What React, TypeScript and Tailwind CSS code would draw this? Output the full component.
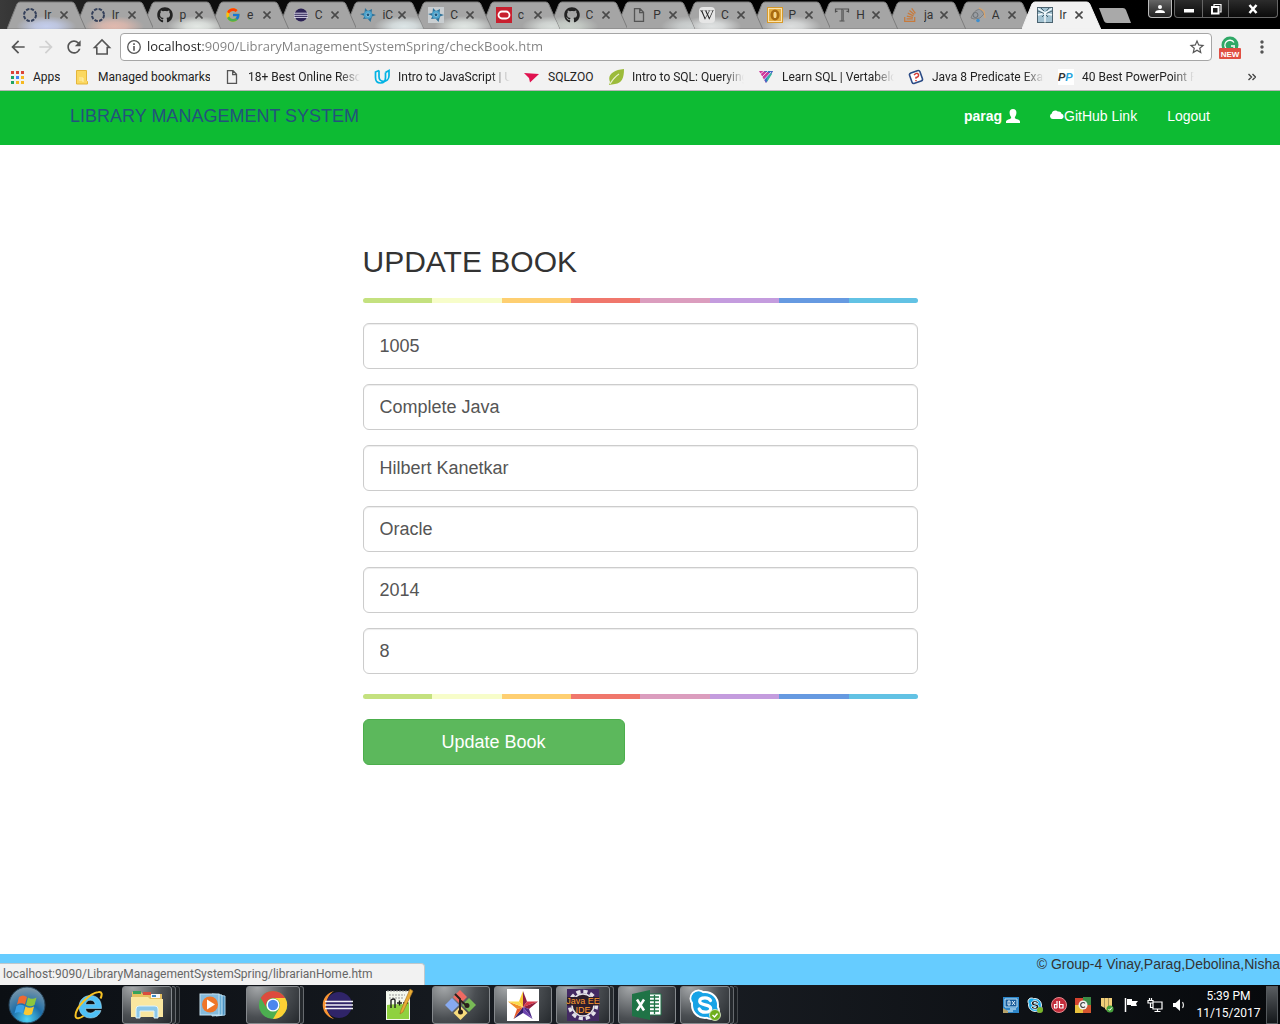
import type { ReactNode } from "react";
import { FaGithub, FaWikipediaW, FaStackOverflow, FaSkype } from "react-icons/fa";
import { FcGoogle } from "react-icons/fc";
import { MdArrowBack, MdArrowForward, MdRefresh, MdStarBorder, MdMoreVert } from "react-icons/md";

const ui = "font-['Open_Sans','Noto_Sans',sans-serif]";
const uiNarrow = "font-[Roboto,'Open_Sans',sans-serif]";

/* ---------- favicons ---------- */

const Ring = () => (
  <svg viewBox="0 0 16 16" className="size-4">
    <circle cx="8" cy="8" r="6" fill="none" stroke="#34405a" strokeWidth="2" strokeDasharray="3.4 1.3" />
  </svg>
);
const EclipseSmall = () => (
  <svg viewBox="0 0 16 16" className="size-4">
    <circle cx="8" cy="8" r="6.5" fill="#2c2255" />
    <path d="M1 6.2h14M1 8.3h14M1 10.4h14" stroke="#d8d4e8" strokeWidth="1" />
  </svg>
);
const Compass = ({ boxed = false }: { boxed?: boolean }) => (
  <svg viewBox="0 0 16 16" className="size-4">
    {boxed && <rect width="16" height="16" fill="#c9ced1" />}
    <path d="M5 1l3 3 4-2-.5 4.500L16 8l-4 1.500-1.500 5.500-3-3.500L3 12l1.500-3L0 7l4.500-1z" fill="#2f7299" />
    <circle cx="8" cy="7.800" r="4" fill="#4ba2cc" />
    <circle cx="8" cy="7.800" r="1.800" fill="#1f5479" stroke="#9ed3ea" strokeWidth=".7" />
  </svg>
);
const Oracle = () => (
  <svg viewBox="0 0 16 16" className="size-4">
    <rect width="16" height="16" fill="#c8202f" />
    <rect x="2.500" y="4.500" width="11" height="7" rx="3.500" fill="none" stroke="#fff" strokeWidth="1.800" />
  </svg>
);
const PageIcon = () => (
  <svg viewBox="0 0 16 16" className="size-4">
    <path d="M3.500 1.700h5.500l3.500 3.600v9H3.500zM8.700 1.900v3.700h3.600" fill="none" stroke="#555" strokeWidth="1.300" />
  </svg>
);
const Wiki = () => (
  <span className="flex size-4 items-center justify-center rounded bg-[#e6e6e6]">
    <FaWikipediaW className="size-3.5 text-[#222]" />
  </span>
);
const Gold = () => (
  <svg viewBox="0 0 16 16" className="size-4">
    <rect width="16" height="16" fill="#d79a2b" />
    <rect x="1.500" y="1.500" width="13" height="13" fill="#e3ad43" stroke="#fbe3ae" />
    <ellipse cx="8" cy="8" rx="3.300" ry="4.300" fill="none" stroke="#a86a12" strokeWidth="2.500" />
    <path d="M8 5v6" stroke="#fff1c5" strokeWidth="1.200" />
  </svg>
);
const SerifT = () => (
  <svg viewBox="0 0 16 16" className="size-4">
    <path d="M1.500 5.500V2h13v3.500M8 2v12M5.500 14h5M1.500 4.300h2M12.500 4.300h2" fill="none" stroke="#505050" strokeWidth="1.200" />
    <path d="M9.500 2.500V14" stroke="#6c6c6c" />
  </svg>
);
const Sketch = () => (
  <svg viewBox="0 0 16 16" className="size-4">
    <path d="M1 11C3 5 6 3 10 2l4 5-4 4-6 1z" fill="#999da2" stroke="#777" strokeWidth=".8" />
    <path d="M9 1l5 3 1 7" fill="none" stroke="#d9a36a" strokeWidth="1.200" />
    <circle cx="5.500" cy="8" r="2.500" fill="none" stroke="#6d7175" />
    <circle cx="8" cy="13.500" r="1.800" fill="#3d8fd0" />
  </svg>
);
const Windmill = () => (
  <svg viewBox="0 0 16 16" className="size-4">
    <rect x=".5" y=".5" width="15" height="15" fill="#a3c3d2" stroke="#4b6370" />
    <path d="M1 1.500l7 4.500 7-4.500M1 8l7-2 7 2M8 6v9.500" fill="none" stroke="#f5fbfd" strokeWidth="1.400" />
    <path d="M1 4l6 2.500M15 4L9.500 6.500M4 1l3 3M12 1L9.500 4M5 10l2-2M11 10L9 8" fill="none" stroke="#45616f" />
  </svg>
);

/* ---------- tab strip ---------- */

type TabData = { label: string; icon: ReactNode; glow?: string; at?: string };

const tabs: TabData[] = [
  { label: "Ir", icon: <Ring />, glow: "#c3cdec", at: "50%" },
  { label: "Ir", icon: <Ring />, glow: "#e0b9ae", at: "50%" },
  { label: "p", icon: <FaGithub className="size-4 text-[#222]" />, glow: "#e3e8e4", at: "70%" },
  { label: "e", icon: <FcGoogle className="size-4" /> },
  { label: "C", icon: <EclipseSmall /> },
  { label: "iC", icon: <Compass />, glow: "#dde6e7", at: "75%" },
  { label: "C", icon: <Compass boxed />, glow: "#e0e6e3", at: "65%" },
  { label: "c", icon: <Oracle />, glow: "#d7dcd9", at: "90%" },
  { label: "C", icon: <FaGithub className="size-4 text-[#222]" />, glow: "#c9d0ca", at: "25%" },
  { label: "P", icon: <PageIcon />, glow: "#cdd1d1", at: "95%" },
  { label: "C", icon: <Wiki />, glow: "#dfe2e2", at: "35%" },
  { label: "P", icon: <Gold />, glow: "#dcdede", at: "50%" },
  { label: "H", icon: <SerifT /> },
  { label: "ja", icon: <FaStackOverflow className="size-4 text-[#c77a3c]" /> },
  { label: "A", icon: <Sketch /> },
  { label: "Ir", icon: <Windmill /> },
];

function Tab({ tab, index }: { tab: TabData; index: number }) {
  const active = index === tabs.length - 1;
  const shape = "M0 28 10 3Q11 1 13 1H65Q67 1 68 3L79 28z";
  return (
    <div className="relative h-7 min-w-0 flex-1" style={{ zIndex: active ? 30 : 20 - index }}>
      <svg viewBox="0 0 79 28" preserveAspectRatio="none" className="absolute top-0 left-0 h-7 w-[calc(100%+11px)]">
        {tab.glow && (
          <radialGradient id={`glow${index}`} cx={tab.at} cy="90%" r="38%">
            <stop offset="0" stopColor={tab.glow} />
            <stop offset=".4" stopColor={tab.glow} stopOpacity=".8" />
            <stop offset="1" stopColor={tab.glow} stopOpacity="0" />
          </radialGradient>
        )}
        <path d={shape} fill={active ? "#f2f2f2" : "#a5a5a5"} stroke={active ? "#f2f2f2" : "#7c7c7c"} strokeWidth="1" />
        {tab.glow && <path d={shape} fill={`url(#glow${index})`} />}
      </svg>
      <div className="relative flex h-7 items-center pl-[15px]">
        <span className="size-4 shrink-0">{tab.icon}</span>
        <span className={`ml-1.5 w-3 shrink-0 overflow-hidden text-xs whitespace-nowrap text-[#333] ${uiNarrow}`}>{tab.label}</span>
        <button aria-label="Close tab" className="ml-1 shrink-0">
          <svg viewBox="0 0 8 8" className="size-2">
            <path d="M.5.5l7 7M7.500.5l-7 7" stroke="#4a4a4a" strokeWidth="1.600" />
          </svg>
        </button>
      </div>
    </div>
  );
}

function TabStrip() {
  return (
    <div className="flex h-[29px] items-start bg-linear-to-r from-[#3a3a3a] via-[#111] via-10% to-black pl-[7px]">
      <div className="flex min-w-0 flex-1 pt-px">
        {tabs.map((t, i) => (
          <Tab key={i} tab={t} index={i} />
        ))}
      </div>
      <div className="flex w-[190px] shrink-0 justify-between pr-0.5 pl-2">
        <button aria-label="New tab" className="mt-2">
          <svg viewBox="0 0 34 15" className="h-[15px] w-[34px]">
            <path d="M1 0h24q2 0 3 2l5 13H9q-2 0-3-2z" fill="#a9a9a9" />
          </svg>
        </button>
        <div className="flex gap-0.5">
          <button aria-label="Profile" className="flex h-[18px] w-6 items-center justify-center rounded-b border border-t-0 border-[#bbb] bg-linear-to-b from-[#666] to-[#222]">
            <svg viewBox="0 0 10 10" className="size-2.5" fill="#fff">
              <circle cx="5" cy="3" r="2" />
              <path d="M0 9q0-3 5-3t5 3z" />
            </svg>
          </button>
          <div className="flex h-[18px] divide-x divide-[#666] rounded-b border border-t-0 border-[#666] bg-linear-to-b from-[#2c2c2c] to-[#0b0b0b]">
            <button aria-label="Minimize" className="flex w-7 items-center justify-center">
              <svg viewBox="0 0 12 12" className="size-3"><path d="M1 6h10v3.500H1z" fill="#fff" /></svg>
            </button>
            <button aria-label="Restore" className="flex w-[26px] items-center justify-center">
              <svg viewBox="0 0 12 12" className="size-3" fill="none" stroke="#fff">
                <path d="M4 3V1.500h7V9H9.500" strokeWidth="1.200" />
                <path d="M2 4h6.500v6.500H2z" strokeWidth="2" />
              </svg>
            </button>
            <button aria-label="Close window" className="flex w-12 items-center justify-center">
              <svg viewBox="0 0 12 12" className="size-3"><path d="M2.500 2l7 8M9.500 2l-7 8" stroke="#fff" strokeWidth="2.500" /></svg>
            </button>
          </div>
        </div>
      </div>
    </div>
  );
}

/* ---------- toolbar ---------- */

function Toolbar() {
  return (
    <div className="flex h-9 items-center bg-[#f2f2f2] pr-2 pl-2">
      <div className="flex w-28 shrink-0 items-center gap-2 text-[#555]">
        <button aria-label="Back"><MdArrowBack className="size-5" /></button>
        <button aria-label="Forward" className="text-[#d0d0d0]"><MdArrowForward className="size-5" /></button>
        <button aria-label="Reload"><MdRefresh className="size-5" /></button>
        <button aria-label="Home">
          <svg viewBox="0 0 20 20" className="size-5" fill="none" stroke="#555" strokeWidth="1.600">
            <path d="M2.500 10.500 10 3l7.500 7.500h-2.300V17H4.800v-6.500z" />
          </svg>
        </button>
      </div>
      <div className="flex h-7 min-w-0 flex-1 items-center rounded-sm border border-[#a6a6a6] bg-white px-[5px]">
        <svg viewBox="0 0 16 16" className="size-4 shrink-0" fill="none" stroke="#555">
          <circle cx="8" cy="8" r="6.300" strokeWidth="1.300" />
          <path d="M8 4.300v1.600M8 7v4.700" strokeWidth="1.600" />
        </svg>
        <input
          aria-label="Address"
          defaultValue="localhost:9090/LibraryManagementSystemSpring/checkBook.htm"
          className="ml-[5px] min-w-0 flex-1 bg-[linear-gradient(90deg,#222_56px,#808080_56px)] bg-clip-text text-[13px] text-transparent outline-none"
        />
        <button aria-label="Bookmark this page"><MdStarBorder className="size-[18px] text-[#555]" /></button>
      </div>
      <button aria-label="Grammarly" className="ml-1.5 shrink-0">
        <svg viewBox="0 0 24 24" className="size-6">
          <circle cx="12" cy="10" r="8.500" fill="#2fa866" />
          <path d="M16 7.500A5 5 0 1 0 16.500 12M17 11h-4" fill="none" stroke="#fff" strokeWidth="1.300" />
          <rect x="1" y="13" width="22" height="11" rx="1" fill="#e04f43" />
          <text x="12" y="21.500" textAnchor="middle" fontSize="8" fontWeight="700" fontFamily="Liberation Sans, sans-serif" fill="#fff">NEW</text>
        </svg>
      </button>
      <button aria-label="Menu" className="ml-2.5 shrink-0"><MdMoreVert className="size-5 text-[#555]" /></button>
    </div>
  );
}

/* ---------- bookmarks ---------- */

const AppsIcon = () => (
  <svg viewBox="0 0 16 16" className="size-4">
    <path d="M2 2h3v3H2zM7 2h3v3H7zM12 2h3v3h-3z" fill="#dc4437" />
    <path d="M2 7h3v3H2zM2 12h3v3H2z" fill="#1fa463" />
    <path d="M7 7h3v3H7z" fill="#4285f4" />
    <path d="M12 7h3v3h-3zM7 12h3v3H7zM12 12h3v3h-3z" fill="#f5b921" />
  </svg>
);
const Folder = () => (
  <svg viewBox="0 0 16 16" className="size-4">
    <path d="M2.500 1.500h10v10l1 1V15h-11z" fill="#fbd861" stroke="#e5b63a" />
    <path d="M5 9h4v4M5 11h4" stroke="#fff0b0" fill="none" />
  </svg>
);
const Udacity = () => (
  <svg viewBox="0 0 16 16" className="size-4" fill="none" stroke="#02b3e4" strokeWidth="1.700">
    <path d="M5 1.500 1.500 3v5.500c0 3.500 2 5.500 5 5.500s5-2 5-5.500V3.500" />
    <path d="M5 1.500v6.300c0 2.500 1.500 4.500 4.500 4.500S15 10.300 15 6.800V1.500l-3.500 2" />
  </svg>
);
const SqlZoo = () => (
  <svg viewBox="0 0 16 16" className="size-4"><path d="M0 4l15 1-9 8.500-1-4.500z" fill="#e0124f" /></svg>
);
const Leaf = () => (
  <svg viewBox="0 0 16 16" className="size-4">
    <path d="M16 0c0 9-2 14-9 15l-6 1 1-3C-1 6 5 1 16 0z" fill="#9cbb3a" />
    <path d="M2 15C5 10 8 7 11 5" stroke="#e9f0cd" fill="none" strokeWidth="1.200" />
  </svg>
);
const Vertabelo = () => (
  <svg viewBox="0 0 16 16" className="size-4">
    <path d="M1 2h14L8 14z" fill="#cf3a9c" />
    <path d="M5 2h10L8 14l-2-4 6-6z" fill="#3b6fc9" />
    <path d="M9 9l4-5 1 1-5 8z" fill="#35b99c" />
    <path d="M1 6l5-4M3 9l7-7M5 12l8-9" stroke="#f2f2f2" strokeWidth=".8" />
  </svg>
);
const JavaQ = () => (
  <svg viewBox="0 0 16 16" className="size-4">
    <rect x="2.500" y="2.500" width="11" height="11" rx="2" transform="rotate(-20 8 8)" fill="#fff" stroke="#2c4c86" strokeWidth="1.600" />
    <path d="M6 6q3-3 4.500-.5Q11 8 8 8.500v1.300M8 11v1.200" fill="none" stroke="#d63b33" strokeWidth="1.500" />
  </svg>
);
const PP = () => (
  <svg viewBox="0 0 16 16" className="size-4">
    <rect width="16" height="16" fill="#fff" />
    <text x="0" y="12" fontSize="11" fontWeight="700" fontStyle="italic" fontFamily="Liberation Sans, sans-serif" fill="#333">
      P<tspan fill="#27a4dd">P</tspan>
    </text>
  </svg>
);

const fade = "w-28 mask-[linear-gradient(90deg,#000_82%,transparent)]";
const bookmarks = [
  { label: "Apps", icon: <AppsIcon />, width: "w-[27px]" },
  { label: "Managed bookmarks", icon: <Folder />, width: "w-28" },
  { label: "18+ Best Online Resources", icon: <PageIcon />, width: fade },
  { label: "Intro to JavaScript | Udacity", icon: <Udacity />, width: fade },
  { label: "SQLZOO", icon: <SqlZoo />, width: "w-[46px]" },
  { label: "Intro to SQL: Querying", icon: <Leaf />, width: fade },
  { label: "Learn SQL | Vertabelo", icon: <Vertabelo />, width: fade },
  { label: "Java 8 Predicate Examples", icon: <JavaQ />, width: fade },
  { label: "40 Best PowerPoint Presentations", icon: <PP />, width: fade },
];

function Bookmarks() {
  return (
    <div className={`flex h-[26px] items-center gap-3.5 border-b border-[#b5b5b5] bg-[#f2f2f2] pr-6 pb-0.5 pl-[9px] ${uiNarrow}`}>
      {bookmarks.map((b) => (
        <a key={b.label} href="#" className="flex shrink-0 items-center gap-2 text-xs text-[#222]">
          {b.icon}
          <span className={`${b.width} overflow-hidden whitespace-nowrap`}>{b.label}</span>
        </a>
      ))}
      <button aria-label="More bookmarks" className="ml-auto">
        <svg viewBox="0 0 8 8" className="size-2" fill="none" stroke="#444" strokeWidth="1.400">
          <path d="M.5 1l3 3-3 3M4.500 1l3 3-3 3" />
        </svg>
      </button>
    </div>
  );
}

/* ---------- page ---------- */

const fields = [
  { label: "Book id", value: "1005" },
  { label: "Title", value: "Complete Java" },
  { label: "Author", value: "Hilbert Kanetkar" },
  { label: "Publisher", value: "Oracle" },
  { label: "Year", value: "2014" },
  { label: "Copies", value: "8" },
];

const Rainbow = () => (
  <hr className="my-5 h-[5px] rounded-[5px] border-0 bg-[linear-gradient(90deg,#c4e17f_12.5%,#f7fdca_12.5%,#f7fdca_25%,#fecf71_25%,#fecf71_37.5%,#f0776c_37.5%,#f0776c_50%,#db9dbe_50%,#db9dbe_62.5%,#c49cde_62.5%,#c49cde_75%,#669ae1_75%,#669ae1_87.5%,#62c2e4_87.5%)]" />
);

function Page() {
  return (
    <div className="relative flex flex-1 flex-col bg-white font-['Liberation_Sans',Arial,sans-serif] text-[#333]">
      <nav className="bg-[#0dbb33]">
        <div className="mx-auto flex h-[54px] max-w-[1170px] items-start justify-between px-[15px]">
          <a href="#" className="pt-[15px] text-lg leading-5 text-[#23527c]">LIBRARY MANAGEMENT SYSTEM</a>
          <div className="flex gap-[30px] pt-[15px] text-sm leading-5 text-white">
            <a href="#" className="flex items-center gap-1 font-bold">
              parag
              <svg viewBox="0 0 14 14" className="size-3.5" fill="#fff">
                <path d="M7 0c2.500 0 3.600 1.700 3.400 4-.1 1.800-.7 3-1.500 3.900v1.300c1 .9 5.100 1.600 5.100 3.200V14H0v-1.600c0-1.600 4.100-2.300 5.100-3.200V7.900C4.300 7 3.700 5.800 3.600 4 3.400 1.700 4.500 0 7 0z" />
              </svg>
            </a>
            <a href="#" className="flex items-center">
              <svg viewBox="0 0 14 14" className="size-3.5" fill="#fff">
                <path d="M2.800 10a2.800 2.800 0 0 1-1-5.400C2 1.700 6 .4 7.800 2.600c2-.6 3.700.6 3.700 2.200A2.700 2.700 0 0 1 11.800 10z" />
              </svg>
              GitHub Link
            </a>
            <a href="#">Logout</a>
          </div>
        </div>
      </nav>
      <main className="flex-1 px-4 pt-[100px]">
        <form className="mx-auto max-w-[555px]" onSubmit={(e) => e.preventDefault()}>
          <h2 className="text-[30px] leading-[33px]">UPDATE BOOK</h2>
          <Rainbow />
          <div className="flex flex-col gap-[15px]">
            {fields.map((f) => (
              <input
                key={f.label}
                aria-label={f.label}
                defaultValue={f.value}
                className="h-[46px] w-full rounded-md border border-[#ccc] bg-white px-4 text-lg text-[#555] shadow-[inset_0_1px_1px_rgba(0,0,0,0.075)]"
              />
            ))}
          </div>
          <Rainbow />
          <button type="submit" className="h-[46px] w-[262px] rounded-md border border-[#4cae4c] bg-[#5cb85c] text-lg text-white">
            Update Book
          </button>
        </form>
      </main>
      <footer className="h-[31px] overflow-hidden bg-[#66ccff] text-right text-sm leading-5 whitespace-nowrap">
        © Group-4 Vinay,Parag,Debolina,Nisha
      </footer>
      <div className={`absolute bottom-0 left-0 h-[22px] w-[425px] rounded-tr border border-b-0 border-l-0 border-[#c0c8cc] bg-[#f2f2f2] pl-[3px] text-xs leading-5 text-[#666] ${uiNarrow}`}>
        localhost:9090/LibraryManagementSystemSpring/librarianHome.htm
      </div>
    </div>
  );
}

/* ---------- taskbar ---------- */

const IE = () => (
  <svg viewBox="0 0 32 32" className="size-8">
    <path
      fillRule="evenodd"
      d="M28.500 19.500H12.500c.4 3 2.300 4.500 5 4.500 2 0 3.500-.9 4.500-2.500h6C26.300 26.500 22.500 29 17.500 29 11 29 6 24.300 6 17.800S11 6.500 17.500 6.500c7 0 11.300 5 11 13zM12.600 15.500h9.600c-.4-2.800-2.200-4.300-4.800-4.300s-4.400 1.500-4.800 4.300z"
      fill="#4fc0f6"
      stroke="#b4e8fd"
      strokeWidth=".5"
    />
    <path d="M27.500 9.500c2-4 1.500-7-2-6.500C17 4 2.500 18 2.500 26.500c0 4.500 5 2.500 8 .5" fill="none" stroke="#f7c325" strokeWidth="2" />
  </svg>
);
const Explorer = () => (
  <svg viewBox="0 0 34 32" className="h-8 w-[34px]">
    <path d="M2 3h9l2 2h19v22H2z" fill="#e6c161" />
    <path d="M3 2h8v3H3z" fill="#36a35b" />
    <path d="M13 3h8v3h-8z" fill="#d94d3e" />
    <path d="M21 5h9v4h-9z" fill="#f6f6f6" />
    <path d="M22 6h4v2h-4z" fill="#3b87c6" />
    <path d="M1 8h17l2 2h13v18H1z" fill="#fae7a0" />
    <path d="M6 29V20q0-3 3-3h16q3 0 3 3v9h-4v-7H10v7z" fill="#8cc8ea" stroke="#e0f4fd" />
  </svg>
);
const Media = () => (
  <svg viewBox="0 0 28 28" className="size-7">
    <path d="M17 4l9 1v19l-9 1z" fill="#4b91c0" stroke="#a8d2ea" />
    <path d="M13 3l10 1v20l-10 1z" fill="#68aed6" stroke="#c2e3f3" />
    <rect x="1" y="3" width="19" height="21" fill="#85bbdc" stroke="#c7e2f0" />
    <circle cx="11" cy="13.500" r="8" fill="#ef7629" />
    <path d="M8 8.500v10l8-5z" fill="#fff" />
  </svg>
);
const Chrome = () => (
  <svg viewBox="0 0 32 32" className="size-[30px]">
    <circle cx="16" cy="16" r="15" fill="#4caf50" />
    <path d="M3 8.500A15 15 0 0 1 29 8.500H16a7.500 7.500 0 0 0-6.500 11.200z" fill="#dd4b3e" />
    <path d="M29 8.500A15 15 0 0 1 16 31l6.500-11.300A7.500 7.500 0 0 0 16 8.500z" fill="#fdd034" />
    <circle cx="16" cy="16" r="7" fill="#fff" />
    <circle cx="16" cy="16" r="5.500" fill="#4a87ee" />
  </svg>
);
const Eclipse = () => (
  <svg viewBox="0 0 32 32" className="size-8">
    <path d="M13 2C-2 6-2 26 13 30 3 24 3 8 13 2z" fill="#f79434" />
    <circle cx="18" cy="16" r="13" fill="#2f2468" />
    <path d="M4 12.500h28M4 16h28M4 19.500h28" stroke="#f3f2f9" strokeWidth="1.600" />
  </svg>
);
const Notepad = () => (
  <svg viewBox="0 0 30 34" className="h-[34px] w-[30px]">
    <path d="M2 3h24v29H2z" fill="#f4f8ee" />
    <path d="M3 17c8-2 15 1 22-3v17H3z" fill="#8fd13f" />
    <path d="M3 3h22M5 7h16M5 10h14" stroke="#999" strokeDasharray="2 1" />
    <path d="M7 20v-8q3-2 4 0v8M13 15h5M15.500 12.500v5M19 15h5M21.500 12.500v5" stroke="#202020" strokeWidth="1.400" fill="none" />
    <path d="M26 1l3 2-10 21-3 2 1-4z" fill="#e8ad35" stroke="#a66d20" strokeWidth=".6" />
  </svg>
);
const GitIcon = () => (
  <svg viewBox="0 0 34 34" className="size-[34px]">
    <path d="M16 2l7 7-7 7-7-7z" fill="#f06a62" />
    <path d="M8 10l7 7-7 7-7-7z" fill="#87aaf0" />
    <path d="M25 10l7 7-7 7-7-7z" fill="#79ba56" />
    <path d="M16.500 18l7 7-7 7-7-7z" fill="#f8dc7c" />
    <path d="M11 6l5 5v14M16 12l7 6" stroke="#2a211c" strokeWidth="2" fill="none" />
    <circle cx="16.500" cy="24" r="2.500" fill="#2a211c" />
    <circle cx="23" cy="17.500" r="2.500" fill="#2a211c" />
  </svg>
);
const Star = () => (
  <svg viewBox="0 0 32 32" className="size-8">
    <rect width="32" height="32" fill="#fff" />
    <path d="M16 2v16l-4-5.500z" fill="#f9c833" />
    <path d="M16 2l4 10.500L16 18z" fill="#8a2046" />
    <path d="M31 12.500H20L16 18z" fill="#d93a4a" />
    <path d="M31 12.500 22 20l-6-2z" fill="#8f1d3c" />
    <path d="M25.500 30 22 20l-6-2z" fill="#4b2a86" />
    <path d="M25.500 30 16 24v-6z" fill="#6c45ae" />
    <path d="M6.500 30 16 24v-6z" fill="#35206f" />
    <path d="M6.500 30 10 20l6-2z" fill="#e65a2b" />
    <path d="M1 12.500 10 20l6-2z" fill="#f08c28" />
    <path d="M1 12.500h11L16 18z" fill="#fad94b" />
  </svg>
);
const JavaEE = () => (
  <svg viewBox="0 0 34 32" className="h-8 w-[34px]">
    <rect x="1" width="32" height="32" fill="#432a63" />
    <circle cx="17" cy="16" r="13.500" fill="none" stroke="#e4e2e8" strokeWidth="3.500" strokeDasharray="4.200 2.860" />
    <circle cx="17" cy="16" r="11" fill="#2c1d2c" stroke="#e4e2e8" strokeWidth="1.500" />
    <rect x="1" y="8" width="32" height="8.500" fill="#2c1d2c" />
    <g fontFamily="Liberation Sans, sans-serif" fontSize="9" textAnchor="middle" fill="#ff9a2e">
      <text x="17" y="15">Java EE</text>
      <text x="17" y="24">IDE</text>
    </g>
  </svg>
);
const Excel = () => (
  <svg viewBox="0 0 32 32" className="size-8">
    <path d="M17 5h13v21H17z" fill="#fff" stroke="#1f7346" />
    <path d="M19 8h9M19 11.500h9M19 15h9M19 18.500h9M19 22h9M23.500 6v19" stroke="#1f7346" strokeWidth="1.300" />
    <path d="M1 5l18-4v30L1 27z" fill="#1f7346" />
    <path d="M6 10.500l7 11M13 10.500l-7 11" stroke="#fff" strokeWidth="2.500" />
  </svg>
);
const SkypeMark = ({ className }: { className: string }) => (
  <svg viewBox="0 0 32 32" className={className}>
    <g fill="#17a3e6" stroke="#fff" strokeWidth="2">
      <circle cx="9.500" cy="9.500" r="8" />
      <circle cx="22" cy="22" r="8" />
      <circle cx="16" cy="16" r="13" />
    </g>
    <circle cx="9.500" cy="9.500" r="7" fill="#17a3e6" />
    <circle cx="22" cy="22" r="7" fill="#17a3e6" />
    <path d="M21.500 11.500c-1-2-3-2.700-5.500-2.700-3 0-5.300 1.200-5.300 3.500 0 5 11 2.200 11 7.200 0 2.500-2.500 3.700-5.500 3.700-2.700 0-5-1-6-3.200" fill="none" stroke="#fff" strokeWidth="3.200" strokeLinecap="round" />
  </svg>
);
const Skype = () => (
  <span className="relative block size-8">
    <SkypeMark className="size-8" />
    <svg viewBox="0 0 12 12" className="absolute right-0 bottom-0 size-3">
      <circle cx="6" cy="6" r="5.500" fill="#6fae1c" stroke="#e4f2d0" strokeWidth=".8" />
      <path d="M3.500 6l2 2 3-3.500" stroke="#fff" strokeWidth="1.400" fill="none" />
    </svg>
  </span>
);

const apps = [
  { name: "Internet Explorer", icon: <IE />, open: false, stack: 0 },
  { name: "File Explorer", icon: <Explorer />, open: true, stack: 2 },
  { name: "Media Player", icon: <Media />, open: false, stack: 0 },
  { name: "Chrome", icon: <Chrome />, open: true, stack: 1 },
  { name: "Eclipse", icon: <Eclipse />, open: false, stack: 0 },
  { name: "Notepad++", icon: <Notepad />, open: false, stack: 0 },
  { name: "Git", icon: <GitIcon />, open: true, stack: 0 },
  { name: "StarUML", icon: <Star />, open: true, stack: 0 },
  { name: "Java EE IDE", icon: <JavaEE />, open: true, stack: 1 },
  { name: "Excel", icon: <Excel />, open: true, stack: 0 },
  { name: "Skype", icon: <Skype />, open: true, stack: 2 },
];

const tray = [
  <svg viewBox="0 0 16 16" className="size-4" key="gfx">
    <rect width="16" height="16" fill="#2d86c9" />
    <path d="M2 2h12v8H2z" fill="#155a9a" stroke="#bfe2f6" />
    <path d="M5 4v4h2V4zM9 4l3 4M12 4L9 8M7 12h6M4 14h6" stroke="#e4f3fb" fill="none" />
    <path d="M0 11l5 3v2H0z" fill="#b7a36a" />
  </svg>,
  <span className="relative block size-4" key="skype">
    <FaSkype className="size-4 text-[#17a9ea]" stroke="#fff" strokeWidth="30" />
    <svg viewBox="0 0 6 6" className="absolute right-0 bottom-0 size-1.5"><circle cx="3" cy="3" r="3" fill="#7ab62c" /></svg>
  </span>,
  <svg viewBox="0 0 16 16" className="size-4" key="audio">
    <circle cx="8" cy="8" r="7.500" fill="#c32c3a" stroke="#e78a90" />
    <path d="M6 4v7M6 7.500H3.500V11H6M8.500 4v7M8.500 7.500H12V11H8.500" fill="none" stroke="#fff" strokeWidth="1.200" />
  </svg>,
  <svg viewBox="0 0 16 16" className="size-4" key="color">
    <path d="M0 1h8v7H0z" fill="#d4432f" /><path d="M8 0h8v8H8z" fill="#3c8a46" />
    <path d="M0 8h8v8H0z" fill="#e8c03c" /><path d="M8 8h8v8H8z" fill="#d4552f" />
    <circle cx="8" cy="8" r="4.500" fill="#f3f3f3" />
    <path d="M10 6.300a2.500 2.500 0 1 0 0 3.400" fill="none" stroke="#444" strokeWidth="1.200" />
  </svg>,
  <svg viewBox="0 0 16 16" className="size-4" key="shield">
    <path d="M2 1h3.700v10L2 9zM6 1h3.700v14L6 12zM10 1h3v10l-3 3z" fill="#f2cf79" />
    <circle cx="11" cy="12" r="3.500" fill="#48a33d" />
    <path d="M9.500 12l1.200 1.300L13 10.500" fill="none" stroke="#fff" />
  </svg>,
  <svg viewBox="0 0 16 16" className="size-4" key="flag">
    <path d="M2.500 1v14" stroke="#fff" strokeWidth="1.500" />
    <path d="M4 2h5v2h6l-2 2.500 1 2.500H8V8H4z" fill="#fff" />
  </svg>,
  <svg viewBox="0 0 16 16" className="size-4" key="net" fill="none" stroke="#fff" strokeWidth="1.200">
    <path d="M6 5h9v7H6zM10.500 12v2.500M7.500 14.500h6M1 3.500h5v2.500H1zM2.500 1v2.500M4.500 1v2.500M3.500 6v4.500H6" />
  </svg>,
  <svg viewBox="0 0 16 16" className="size-4" key="sound">
    <path d="M2 6h2.500L9 2v12l-4.500-4H2z" fill="#fff" />
    <path d="M11.500 5q2 3 0 6" fill="none" stroke="#ddd" strokeWidth="1.200" />
  </svg>,
];

function Taskbar() {
  return (
    <div className={`flex h-[39px] items-center bg-linear-to-r from-[#0b0f14] via-[#1a1e24] to-[#07090c] ${uiNarrow}`}>
      <button aria-label="Start" className="flex w-[60px] shrink-0 pl-2">
        <svg viewBox="0 0 38 38" className="size-[38px]">
          <radialGradient id="orb" cx="50%" cy="90%" r="85%">
            <stop offset="0" stopColor="#4ed4f5" />
            <stop offset=".5" stopColor="#1e6ea8" />
            <stop offset="1" stopColor="#7794a8" />
          </radialGradient>
          <circle cx="19" cy="19" r="18" fill="url(#orb)" stroke="#27445a" />
          <path d="M11 11q4-3 8 0l-2 7.500q-4-2.500-8 0z" fill="#ee6a32" />
          <path d="M20 11.500q4 2.500 8.500 0l-2 7.500q-4 2.500-8.500 0z" fill="#8cc63e" />
          <path d="M8.500 20q4-2.500 8 0l-2 7.500q-4-2.500-8 0z" fill="#3aa0e6" />
          <path d="M17.500 20.500q4 2.500 8.500 0L24 28q-4 2.500-8.500 0z" fill="#fbc832" />
        </svg>
      </button>
      <div className="flex shrink-0 gap-1">
        {apps.map((a) => (
          <div key={a.name} className="flex h-[38px] w-[58px]">
            <button
              aria-label={a.name}
              className={
                a.open
                  ? "flex min-w-0 flex-1 items-center justify-center rounded-[3px] border border-[#85898d] bg-[radial-gradient(circle_at_20%_0%,#a5a8aa,#4a4e52_55%,#25292d)]"
                  : "flex min-w-0 flex-1 items-center justify-center"
              }
            >
              <span className="shrink-0">{a.icon}</span>
            </button>
            {a.stack > 0 && <span className="w-1 rounded-r-[3px] border border-l-0 border-[#666a6e] bg-[#25292d]" />}
            {a.stack > 1 && <span className="w-1 rounded-r-[3px] border border-l-0 border-[#44484c] bg-[#1a1e22]" />}
          </div>
        ))}
      </div>
      <div className="ml-auto flex shrink-0 gap-2">{tray}</div>
      <div className="w-[79px] shrink-0 pl-1 text-center text-xs leading-[17px] text-white">
        <div>5:39 PM</div>
        <div>11/15/2017</div>
      </div>
      <button aria-label="Show desktop" className="mr-0.5 h-[38px] w-3 shrink-0 border border-[#55595d] bg-linear-to-b from-[#5a5e62] to-[#15181b]" />
    </div>
  );
}

export default function App() {
  return (
    <div className="flex min-h-screen flex-col overflow-hidden">
      <header className={ui}>
        <TabStrip />
        <Toolbar />
        <Bookmarks />
      </header>
      <Page />
      <Taskbar />
    </div>
  );
}
